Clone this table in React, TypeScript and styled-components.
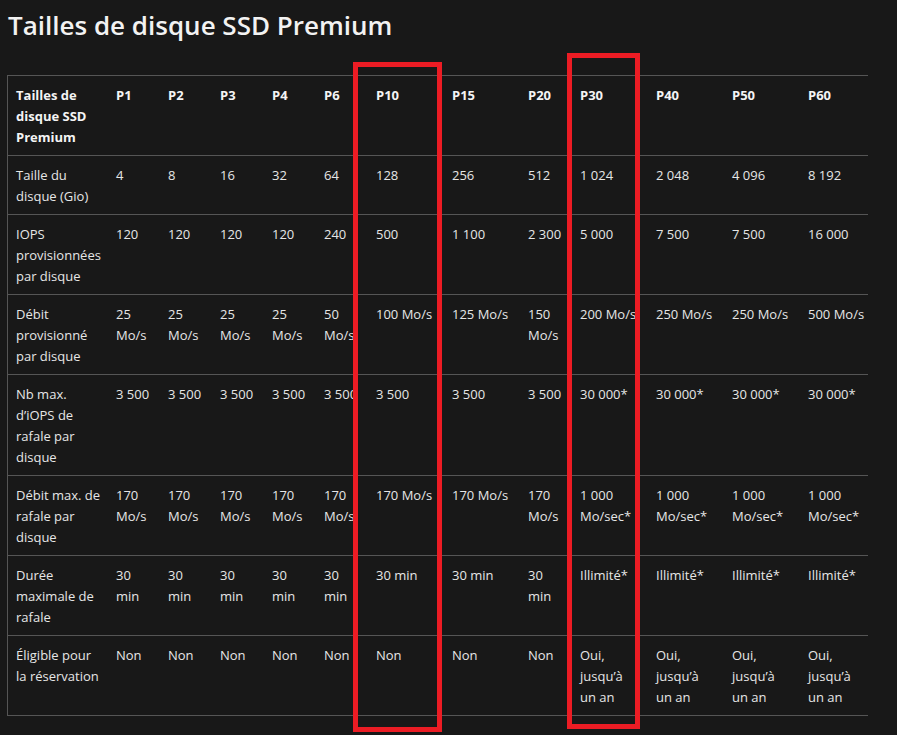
import React from "react";
import styled, { createGlobalStyle } from "styled-components";

const GlobalStyle = createGlobalStyle`
  html, body {
    margin: 0;
    padding: 0;
    background: #181818;
    overflow: hidden;
  }
  body {
    font-family: "Open Sans", "Noto Sans", sans-serif;
    color: #e6e6e6;
  }
`;

const Page = styled.div`
  padding: 6px 0 0 0;
  width: 897px;
  height: 735px;
  box-sizing: border-box;
`;

const Title = styled.h1`
  margin: 0 0 0 8px;
  font-size: 26px;
  font-weight: 600;
  line-height: 38px;
  color: #f2f2f2;
`;

const Stage = styled.div`
  position: relative;
  margin-top: 31px;
`;

const Scroller = styled.div`
  margin-left: 7px;
  width: 860px;
  overflow: hidden;
  border-left: 1px solid #555;
`;

const Table = styled.table`
  border-collapse: separate;
  border-spacing: 0;
  table-layout: fixed;
  width: 868px;
  font-size: 13px;
  line-height: 21px;
  border-bottom: 1px solid #555;
`;

const Cell = styled.td<{ $head?: boolean; $first?: boolean }>`
  padding: 9px ${(p) => (p.$first ? 4 : 8)}px 7px 8px;
  border-top: 1px solid #555;
  vertical-align: top;
  text-align: left;
  font-weight: ${(p) => (p.$head ? 700 : 400)};
  color: ${(p) => (p.$head ? "#f4f4f4" : "#e6e6e6")};
  overflow: visible;
`;

const Highlight = styled.div`
  position: absolute;
  border: 5px solid #ec1c24;
  box-sizing: border-box;
  pointer-events: none;
`;

const nb = (s: string) => s.replace(/(\d) (\d)/g, "$1\u00a0$2");

const widths = [100, 52, 52, 52, 52, 52, 76, 76, 52, 76, 76, 76, 76];

const headers = [
  "Tailles de disque SSD Premium",
  "P1",
  "P2",
  "P3",
  "P4",
  "P6",
  "P10",
  "P15",
  "P20",
  "P30",
  "P40",
  "P50",
  "P60",
];

const rep = (v: string, n: number) => Array.from({ length: n }, () => v);

const rows: string[][] = [
  ["Taille du disque (Gio)", "4", "8", "16", "32", "64", "128", "256", "512", "1 024", "2 048", "4 096", "8 192"],
  ["IOPS provisionnées par disque", "120", "120", "120", "120", "240", "500", "1 100", "2 300", "5 000", "7 500", "7 500", "16 000"],
  [
    "Débit provisionné par disque",
    "25 Mo/s",
    "25 Mo/s",
    "25 Mo/s",
    "25 Mo/s",
    "50 Mo/s",
    "100 Mo/s",
    "125 Mo/s",
    "150 Mo/s",
    "200 Mo/s",
    "250 Mo/s",
    "250 Mo/s",
    "500 Mo/s",
  ],
  ["Nb max. d’iOPS de rafale par disque", ...rep("3 500", 8), ...rep("30 000*", 4)],
  ["Débit max. de rafale par disque", ...rep("170 Mo/s", 8), ...rep("1 000 Mo/sec*", 4)],
  ["Durée maximale de rafale", ...rep("30 min", 8), ...rep("Illimité*", 4)],
  ["Éligible pour la réservation", ...rep("Non", 8), ...rep("Oui, jusqu’à un an", 4)],
];

const boxes = [
  { left: 353, top: -13, width: 89, height: 670 },
  { left: 567, top: -22, width: 73, height: 676 },
];

export default function App() {
  return (
    <>
      <GlobalStyle />
      <Page>
        <Title>Tailles de disque SSD Premium</Title>
        <Stage>
          <Scroller>
            <Table>
              <colgroup>
                {widths.map((w, i) => (
                  <col key={i} style={{ width: w }} />
                ))}
              </colgroup>
              <thead>
                <tr>
                  {headers.map((h, i) => (
                    <Cell as="th" $head $first={i === 0} key={h}>
                      {h}
                    </Cell>
                  ))}
                </tr>
              </thead>
              <tbody>
                {rows.map((r, ri) => (
                  <tr key={ri}>
                    {r.map((c, ci) => (
                      <Cell key={ci} $first={ci === 0}>
                        {nb(c)}
                      </Cell>
                    ))}
                  </tr>
                ))}
              </tbody>
            </Table>
          </Scroller>
          {boxes.map((b, i) => (
            <Highlight
              key={i}
              style={{ left: b.left, top: b.top, width: b.width, height: b.height }}
            />
          ))}
        </Stage>
      </Page>
    </>
  );
}
